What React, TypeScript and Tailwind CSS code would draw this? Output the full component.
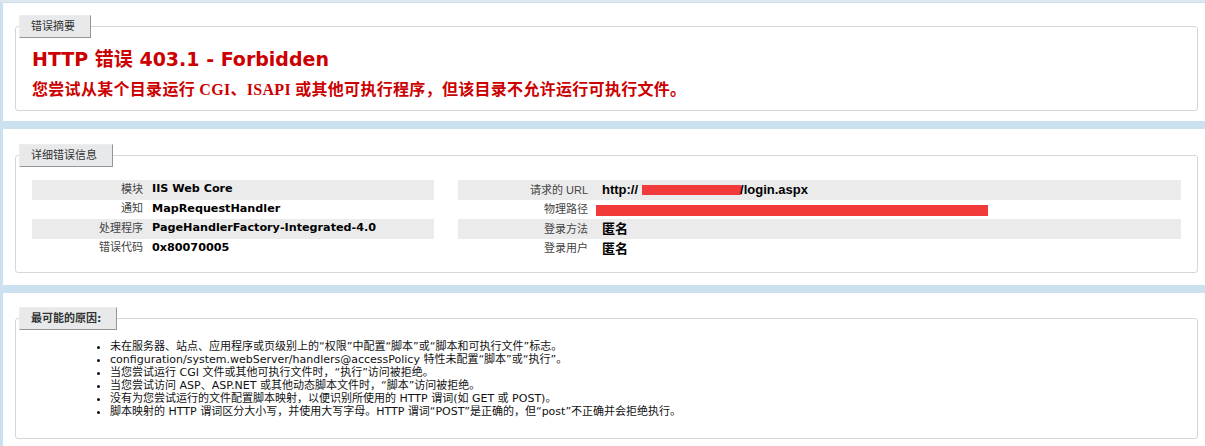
import type { ReactNode } from 'react'

const leftRows = [
  { label: '模块', value: 'IIS Web Core' },
  { label: '通知', value: 'MapRequestHandler' },
  { label: '处理程序', value: 'PageHandlerFactory-Integrated-4.0' },
  { label: '错误代码', value: '0x80070005' },
]

const causes = [
  '未在服务器、站点、应用程序或页级别上的“权限”中配置“脚本”或“脚本和可执行文件”标志。',
  'configuration/system.webServer/handlers@accessPolicy 特性未配置“脚本”或“执行”。',
  '当您尝试运行 CGI 文件或其他可执行文件时，“执行”访问被拒绝。',
  '当您尝试访问 ASP、ASP.NET 或其他动态脚本文件时，“脚本”访问被拒绝。',
  '没有为您尝试运行的文件配置脚本映射，以便识别所使用的 HTTP 谓词(如 GET 或 POST)。',
  '脚本映射的 HTTP 谓词区分大小写，并使用大写字母。HTTP 谓词“POST”是正确的，但“post”不正确并会拒绝执行。',
]

function Section({ title, bold, className, children }: { title: string; bold?: boolean; className: string; children: ReactNode }) {
  return (
    <div className={`bg-white pl-[12px] pr-[7px] ${className}`}>
      <fieldset className="rounded-[3px] border border-[#d6d6d6] px-[16px]">
        <legend
          className={`-ml-[13px] border-t border-l border-[#ededed] border-r-[#969696] border-b-[#969696] border-r border-b bg-[#e7e9eb] pl-[11px] pr-[15px] py-[4px] text-[11px] leading-[13px] text-[#333] ${bold ? 'font-bold' : 'font-normal'}`}
        >
          {title}
        </legend>
        {children}
      </fieldset>
    </div>
  )
}

function Row({ alt, labelWidth, label, children }: { alt: boolean; labelWidth: string; label: string; children: ReactNode }) {
  return (
    <div className={`flex h-[19.5px] items-center ${alt ? 'bg-[#ebebeb]' : ''}`}>
      <div className={`${labelWidth} shrink-0 text-right text-[11px] text-[#444]`}>{label}</div>
      <div className="flex min-w-0 items-center">{children}</div>
    </div>
  )
}

export default function App() {
  return (
    <div className="h-[446px] w-[1205px] overflow-hidden border-t-[2px] border-[#dfe6ec] bg-[#cbe1ef] pl-[3px] pt-[1px] font-['DejaVu_Sans','Noto_Sans_CJK_SC',sans-serif] text-[11px] text-black">
      <Section title="错误摘要" className="pt-[12px] pb-[10px]">
        <h2 className="mt-[10px] text-[19px] leading-[22px] font-bold text-[#cc0000]">HTTP 错误 403.1 - Forbidden</h2>
        <h3 className="mt-[9px] pb-[9px] font-['Liberation_Serif','Noto_Sans_CJK_SC',serif] text-[16px] leading-[22px] font-bold tracking-[0.3px] text-[#cc0000]">
          您尝试从某个目录运行 CGI、ISAPI 或其他可执行程序，但该目录不允许运行可执行文件。
        </h3>
      </Section>

      <Section title="详细错误信息" className="mt-[8px] pt-[15px] pb-[12px]">
        <div className="mt-[13px] flex gap-[24px] pb-[14px]">
          <div className="w-[402px]">
            {leftRows.map((r, i) => (
              <Row key={r.label} alt={i % 2 === 0} labelWidth="w-[120px] pr-[9px]" label={r.label}>
                <span className="text-[11.2px] font-bold">{r.value}</span>
              </Row>
            ))}
          </div>
          <div className="w-[723px] font-['Liberation_Sans','Noto_Sans_CJK_SC',sans-serif]">
            <Row alt labelWidth="w-[144px] pr-[14px]" label="请求的 URL">
              <span className="text-[13px] font-bold">http://</span>
              <span className="ml-[4px] inline-block h-[10px] w-[100px] rounded-r-[2px] bg-[#f23a3a]" />
              <span className="-ml-[2px] text-[13px] font-bold">/login.aspx</span>
            </Row>
            <Row alt={false} labelWidth="w-[144px] pr-[14px]" label="物理路径">
              <span className="-ml-[6px] mt-[3px] inline-block h-[11px] w-[392px] bg-[#f23a3a]" />
            </Row>
            <Row alt labelWidth="w-[144px] pr-[14px]" label="登录方法">
              <span className="text-[13px] font-bold">匿名</span>
            </Row>
            <Row alt={false} labelWidth="w-[144px] pr-[14px]" label="登录用户">
              <span className="text-[13px] font-bold">匿名</span>
            </Row>
          </div>
        </div>
      </Section>

      <Section title="最可能的原因:" bold className="mt-[8px] pt-[14px] pb-[12px]">
        <ul className="mt-[10px] list-disc pb-[20px] pl-[78px] text-[11px] leading-[13px] text-[#111]">
          {causes.map((c) => (
            <li key={c}>{c}</li>
          ))}
        </ul>
      </Section>
    </div>
  )
}
